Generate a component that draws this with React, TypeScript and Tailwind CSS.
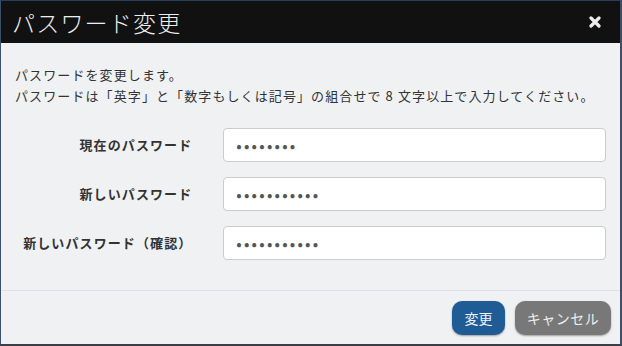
import { useState } from 'react';

const fields = [
  { label: '現在のパスワード', value: 'password' },
  { label: '新しいパスワード', value: 'newpassword' },
  { label: '新しいパスワード（確認）', value: 'newpassword' },
];

const jp = { fontFamily: '"Noto Sans CJK JP", "Noto Sans", sans-serif' };

export default function App() {
  const [values, setValues] = useState(fields.map((f) => f.value));

  return (
    <div
      style={jp}
      className="w-[622px] h-[346px] flex flex-col bg-[#eff1f3] border-t border-l border-r-2 border-b-2 border-t-[#25405f] border-l-[#3a4f6a] border-r-[#3a4f6a] border-b-[#3b3f45] overflow-hidden"
    >
      {/* Header */}
      <div className="h-[42px] shrink-0 bg-[#111111] flex items-center justify-between pl-[11px] pr-[19px]">
        <h1 className="text-[23px] font-light text-[#eeeeee] leading-none tracking-[1.2px]">パスワード変更</h1>
        <button className="text-[#eeeeee]" aria-label="close">
          <svg width="12" height="12" viewBox="0 0 12 12">
            <path d="M2 2 L10 10 M10 2 L2 10" stroke="currentColor" strokeWidth="3.2" strokeLinecap="round" />
          </svg>
        </button>
      </div>

      {/* Body */}
      <div className="flex-1 px-[14px] pt-[21px]">
        <p className="text-[13px] leading-[21px] text-[#333333] tracking-[1.1px]">
          パスワードを変更します。
          <br />
          パスワードは「英字」と「数字もしくは記号」の組合せで 8 文字以上で入力してください。
        </p>

        <div className="mt-[22px] flex flex-col gap-[15px]">
          {fields.map((f, i) => (
            <div key={f.label} className="flex items-center">
              <label className="w-[178px] text-right text-[13px] font-bold text-[#333333] tracking-[1.1px]">
                {f.label}
              </label>
              <input
                type="password"
                value={values[i]}
                onChange={(e) => setValues(values.map((v, j) => (j === i ? e.target.value : v)))}
                className="ml-[31px] w-[384px] h-[34px] rounded-[4px] border border-[#cccccc] bg-white px-[12px] text-[16px] tracking-[2.2px] text-[#555555] outline-none"
              />
            </div>
          ))}
        </div>
      </div>

      {/* Footer */}
      <div className="h-[54px] shrink-0 border-t border-[#dcdfe3] flex items-center justify-end gap-[10px] pr-[9px] pt-px">
        <button className="h-[34px] w-[53px] rounded-[10px] bg-[#1f5c96] text-[14px] text-[#eef2f7] shadow-[0_1px_2px_rgba(0,0,0,0.35)]">
          変更
        </button>
        <button className="h-[34px] w-[96px] rounded-[10px] bg-[#787878] text-[14px] text-[#eeeeee] tracking-[0.5px] shadow-[0_1px_2px_rgba(0,0,0,0.35)]">
          キャンセル
        </button>
      </div>
    </div>
  );
}
